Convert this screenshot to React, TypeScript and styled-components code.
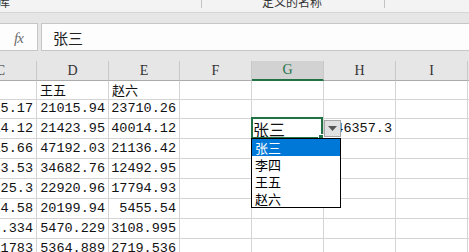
import React from "react";
import styled, { createGlobalStyle } from "styled-components";

const GlobalStyle = createGlobalStyle`
  html, body {
    margin: 0;
    padding: 0;
    background: #ffffff;
    overflow: hidden;
  }
  body {
    font-family: "Noto Sans CJK SC", sans-serif;
  }
`;

const Page = styled.div`
  width: 469px;
  height: 252px;
  overflow: hidden;
  display: flex;
  flex-direction: column;
  background: #e6e6e6;
`;

const Ribbon = styled.div`
  flex: none;
  height: 12px;
  display: grid;
  grid-template-columns: 202px 183px 1fr;
  background: #f3f3f3;
  border-bottom: 1px solid #d5d5d5;
  overflow: hidden;
`;

const RibbonGroup = styled.div<{ $center?: boolean }>`
  height: 8px;
  display: flex;
  justify-content: ${(p) => (p.$center ? "center" : "flex-start")};
  border-right: 1px solid #c4c4c4;
  overflow: visible;
`;

const RibbonLabel = styled.span`
  font-size: 12px;
  line-height: 12px;
  margin-top: -4px;
  margin-left: -2px;
  color: #333;
  white-space: nowrap;
`;

const Band = styled.div`
  flex: none;
  height: 10px;
`;

const FormulaBar = styled.div`
  flex: none;
  height: 28px;
  display: flex;
  gap: 3px;
  margin-left: -1px;
`;

const FxBox = styled.div`
  width: 39px;
  box-sizing: border-box;
  background: #fdfdfd;
  border: 1px solid #c6c6c6;
  display: flex;
  align-items: center;
  justify-content: center;
  padding-top: 2px;
  font-family: "Liberation Serif", serif;
  font-style: italic;
  font-size: 15px;
  color: #6e6e6e;
  letter-spacing: -1px;
`;

const FormulaInput = styled.div`
  flex: 1;
  box-sizing: border-box;
  background: #fdfdfd;
  border: 1px solid #c6c6c6;
  border-right: none;
  display: flex;
  align-items: center;
  padding-left: 11px;
  font-size: 15px;
  color: #222;
`;

const Sheet = styled.div`
  flex: 1;
  margin-left: -35px;
  display: grid;
  grid-template-columns: 72px 72px 71px 72px 72px 72px 72px 72px;
  grid-template-rows: 20px 19px 19px repeat(7, 20px);
  background: #ffffff;
`;

const HeadCell = styled.div<{ $active?: boolean }>`
  box-sizing: border-box;
  background: ${(p) => (p.$active ? "#d2d2d2" : "#e6e6e6")};
  border-right: 1px solid #c8c8c8;
  border-bottom: ${(p) => (p.$active ? "2px solid #217346" : "1px solid #ababab")};
  display: flex;
  align-items: center;
  justify-content: center;
  font-family: "Liberation Serif", serif;
  font-size: 14px;
  color: ${(p) => (p.$active ? "#217346" : "#333")};
`;

const Cell = styled.div<{ $num?: boolean }>`
  position: relative;
  box-sizing: border-box;
  border-right: 1px solid #d4d4d4;
  border-bottom: 1px solid #d4d4d4;
  display: flex;
  align-items: flex-end;
  justify-content: ${(p) => (p.$num ? "flex-end" : "flex-start")};
  padding: ${(p) => (p.$num ? "0 3px 1px 0" : "0 0 1px 3px")};
  font-family: ${(p) =>
    p.$num ? `"Liberation Mono", monospace` : `"Noto Sans CJK SC", sans-serif`};
  font-size: ${(p) => (p.$num ? "13.5px" : "13px")};
  line-height: 16px;
  color: #111;
  white-space: nowrap;
`;

const ActiveCell = styled(Cell)`
  z-index: 3;
  font-size: 16px;
  line-height: 18px;
  padding: 0 0 0 1px;
  align-items: center;
`;

const ActiveFrame = styled.div`
  position: absolute;
  top: -2px;
  left: -1px;
  right: 0;
  bottom: -1px;
  border: 2px solid #217346;
  pointer-events: none;
`;

const FillHandle = styled.div`
  position: absolute;
  right: -3px;
  bottom: -3px;
  width: 4px;
  height: 4px;
  background: #217346;
  border: 1px solid #ffffff;
`;

const DropButton = styled.div`
  position: absolute;
  left: 72px;
  top: 1px;
  width: 17px;
  height: 17px;
  box-sizing: border-box;
  background: #e1e1e1;
  border: 1px solid #a6a6a6;
  display: flex;
  align-items: center;
  justify-content: center;
`;

const DropList = styled.div`
  position: absolute;
  left: -1px;
  top: 19px;
  width: 90px;
  box-sizing: border-box;
  border: 1px solid #000;
  background: #fff;
  display: flex;
  flex-direction: column;
`;

const DropItem = styled.div<{ $selected?: boolean }>`
  height: 17px;
  line-height: 17px;
  padding-left: 3px;
  font-size: 13px;
  background: ${(p) => (p.$selected ? "#0078d7" : "transparent")};
  color: ${(p) => (p.$selected ? "#ffffff" : "#000000")};
`;

const columns = ["C", "D", "E", "F", "G", "H", "I", "J"];

const rows: string[][] = [
  ["", "王五", "赵六", "", "", "", "", ""],
  ["24325.17", "21015.94", "23710.26", "", "", "", "", ""],
  ["35214.12", "21423.95", "40014.12", "", "张三", "46357.3", "", ""],
  ["26915.66", "47192.03", "21136.42", "", "", "", "", ""],
  ["18433.53", "34682.76", "12492.95", "", "", "", "", ""],
  ["24825.3", "22920.96", "17794.93", "", "", "", "", ""],
  ["19874.58", "20199.94", "5455.54", "", "", "", "", ""],
  ["5896.334", "5470.229", "3108.995", "", "", "", "", ""],
  ["3211783", "5364.889", "2719.536", "", "", "", "", ""],
];

const options = ["张三", "李四", "王五", "赵六"];

const isNumber = (v: string) => /^[\d.]+$/.test(v);

const App = () => {
  return (
    <>
      <GlobalStyle />
      <Page>
        <Ribbon>
          <RibbonGroup>
            <RibbonLabel>库</RibbonLabel>
          </RibbonGroup>
          <RibbonGroup $center>
            <RibbonLabel>定义的名称</RibbonLabel>
          </RibbonGroup>
          <div />
        </Ribbon>
        <Band />
        <FormulaBar>
          <FxBox>fx</FxBox>
          <FormulaInput>张三</FormulaInput>
        </FormulaBar>
        <Band />
        <Sheet>
          {columns.map((c) => (
            <HeadCell key={c} $active={c === "G"}>
              {c}
            </HeadCell>
          ))}
          {rows.map((row, r) =>
            row.map((value, c) => {
              if (r === 2 && columns[c] === "G") {
                return (
                  <ActiveCell key={`${r}-${c}`}>
                    {value}
                    <ActiveFrame>
                      <FillHandle />
                    </ActiveFrame>
                    <DropButton>
                      <svg width="9" height="5" viewBox="0 0 9 5">
                        <path d="M0 0 H9 L4.5 5 Z" fill="#555" />
                      </svg>
                    </DropButton>
                    <DropList>
                      {options.map((o, i) => (
                        <DropItem key={o} $selected={i === 0}>
                          {o}
                        </DropItem>
                      ))}
                    </DropList>
                  </ActiveCell>
                );
              }
              return (
                <Cell key={`${r}-${c}`} $num={isNumber(value)}>
                  {value}
                </Cell>
              );
            })
          )}
        </Sheet>
      </Page>
    </>
  );
};

export default App;
